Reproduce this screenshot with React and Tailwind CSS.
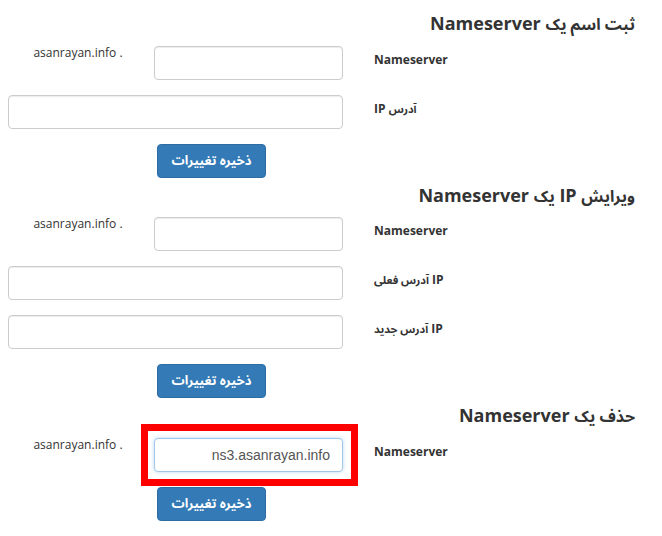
const font = "font-['Open_Sans','Noto_Sans_Arabic','DejaVu_Sans',sans-serif]";

// Persian runs fall back to DejaVu, which runs wide: set them a touch smaller
const Fa = ({ children, className = '' }) => <span className={`leading-none ${className}`}>{children}</span>;

const Heading = ({ children, className = '' }) => (
  <h3 dir="rtl" className={`h-[20px] text-[18px] leading-[20px] font-bold text-[#333] pr-[27px] ${className}`}>
    {children}
  </h3>
);

const Label = ({ children }) => (
  <label dir="rtl" className="ml-[31px] pt-[5px] text-[12px] leading-[17px] font-bold text-[#333] text-left">
    {children}
  </label>
);

const NameserverRow = ({ value, highlight }) => (
  <div className="flex items-start mb-[15px]">
    <div className="flex items-start w-[343px] pl-[8px]">
      <div className="w-[146px] pr-[6px] text-center text-[12px] leading-[13px] text-[#333]">
        <span dir="ltr">asanrayan.info .</span>
      </div>
      <div className="relative">
        <input
          dir="rtl"
          readOnly
          defaultValue={value}
          className={`block w-[189px] h-[34px] px-[12px] rounded-[4px] border bg-white text-[14px] text-[#555] font-['Liberation_Sans',Arial,sans-serif] outline-none ${
            highlight
              ? 'border-[#a3c6e6] shadow-[0_0_4px_rgba(102,175,233,0.45)]'
              : 'border-[#ccc] shadow-[inset_0_1px_1px_rgba(0,0,0,0.075)]'
          }`}
        />
        {highlight && (
          <div className="absolute -top-[14px] -bottom-[14px] -left-[13px] -right-[15px] border-[7px] border-[#ff0000] pointer-events-none" />
        )}
      </div>
    </div>
    <Label>Nameserver</Label>
  </div>
);

const WideRow = ({ children }) => (
  <div className="flex items-start mb-[15px]">
    <div className="w-[343px] pl-[8px]">
      <input
        readOnly
        className="block w-[335px] h-[34px] px-[12px] rounded-[4px] border border-[#ccc] bg-white shadow-[inset_0_1px_1px_rgba(0,0,0,0.075)] outline-none"
      />
    </div>
    <Label>{children}</Label>
  </div>
);

const SaveButton = () => (
  <button
    dir="rtl"
    className="block ml-[157px] w-[109px] h-[34px] rounded-[4px] bg-[#337ab7] border border-[#2e6da4] text-white text-[13px] font-bold"
  >
    ذخیره تغییرات
  </button>
);

export default function App() {
  return (
    <div className={`w-[662px] h-[536px] bg-white overflow-hidden ${font}`}>
      <Heading className="mt-[13px] mb-[13px]">
        <Fa className="text-[16px]">ثبت اسم یک</Fa> Nameserver
      </Heading>
      <NameserverRow />
      <WideRow>
        <Fa className="text-[11px]">آدرس</Fa> IP
      </WideRow>
      <SaveButton />

      <Heading className="mt-[7px] mb-[12px]">
        <Fa className="text-[16px]">ویرایش</Fa> IP <Fa className="text-[16px]">یک</Fa> Nameserver
      </Heading>
      <NameserverRow />
      <WideRow>
        IP <Fa className="text-[11px]">آدرس فعلی</Fa>
      </WideRow>
      <WideRow>
        IP <Fa className="text-[11px]">آدرس جدید</Fa>
      </WideRow>
      <SaveButton />

      <Heading className="mt-[7px] mb-[13px]">
        <Fa className="text-[16px]">حذف یک</Fa> Nameserver
      </Heading>
      <NameserverRow value="ns3.asanrayan.info" highlight />
      <SaveButton />
    </div>
  );
}
